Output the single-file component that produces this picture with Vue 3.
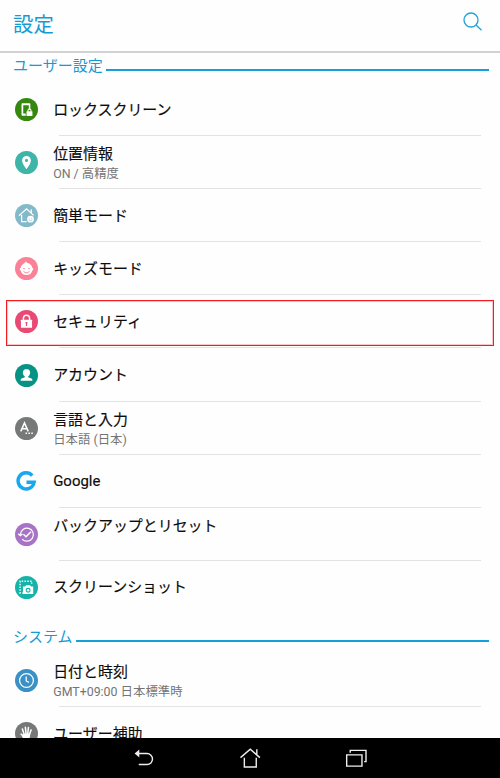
<script setup>
const sections = [
	{
		title: 'ユーザー設定',
		items: [
			{ icon: 'lockscreen', color: '#36870f', label: 'ロックスクリーン' },
			{ icon: 'location', color: '#3db5a9', label: '位置情報', summary: 'ON / 高精度' },
			{ icon: 'easy', color: '#84b9ca', label: '簡単モード' },
			{ icon: 'kids', color: '#fb8196', label: 'キッズモード' },
			{ icon: 'security', color: '#e84a73', label: 'セキュリティ', selected: true },
			{ icon: 'account', color: '#079284', label: 'アカウント' },
			{ icon: 'language', color: '#757977', label: '言語と入力', summary: '日本語 (日本)' },
			{ icon: 'google', color: 'none', label: 'Google' },
			{ icon: 'backup', color: '#a873c4', label: 'バックアップとリセット', summary: '' },
			{ icon: 'screenshot', color: '#16b3a8', label: 'スクリーンショット' },
		],
	},
	{
		title: 'システム',
		items: [
			{ icon: 'clock', color: '#3b91c5', label: '日付と時刻', summary: 'GMT+09:00 日本標準時' },
			{ icon: 'accessibility', color: '#757877', label: 'ユーザー補助' },
		],
	},
]
</script>

<template>
	<div class="screen">
		<header class="app-bar">
			<h1 class="app-title">設定</h1>
			<svg class="search" viewBox="0 0 20 20">
				<circle cx="8" cy="8" r="7" />
				<path d="M13 13l5.5 5.3" />
			</svg>
		</header>

		<main class="content">
			<section v-for="section in sections" :key="section.title" class="section">
				<h2 class="section-title">
					<span>{{ section.title }}</span>
					<i class="section-line"></i>
				</h2>
				<div v-for="item in section.items" :key="item.label" class="row" :class="{ selected: item.selected }">
					<svg class="icon" viewBox="0 0 24 24">
						<circle cx="12" cy="12" r="12" :fill="item.color" />
						<g v-if="item.icon === 'lockscreen'">
							<path fill="#fff" fill-rule="evenodd" d="M7.6 5.4h7.6c.5 0 .8.3.8.8v5.6h-1.6V7.6H8.6v8.6h2.6v2.2H7.6a.8.8 0 0 1-.8-.8V6.2c0-.5.3-.8.8-.8z" />
							<rect x="12" y="13.8" width="6.2" height="5" rx=".4" fill="#fff" />
							<path class="line" stroke-width="1.2" d="M13.5 14.2v-1a1.6 1.6 0 0 1 3.2 0v1" />
						</g>
						<path
							v-else-if="item.icon === 'location'"
							fill="#fff"
							fill-rule="evenodd"
							d="M12 5.2a4.6 4.6 0 0 0-4.6 4.6c0 3.4 4.6 9 4.6 9s4.6-5.6 4.6-9A4.6 4.6 0 0 0 12 5.2zm0 3a1.6 1.6 0 1 1 0 3.2 1.6 1.6 0 0 1 0-3.2z"
						/>
						<g v-else-if="item.icon === 'easy'">
							<path class="line" stroke-width="1.3" d="M4.2 12.2L12 5l7.4 6.9M17 9.4V5.5M6.9 11.5v7h5.3" />
							<circle cx="16.2" cy="15.8" r="3.5" fill="#fff" />
							<path d="M14.2 16.4q2 2 4 0M15 14.3v.8M17.4 14.3v.8" fill="none" stroke="#84b9ca" stroke-width=".7" />
						</g>
						<g v-else-if="item.icon === 'kids'">
							<path fill="#fff" d="M11.6 3.8c-.3 1.3.4 2.1 1.6 2.5 2.5.5 4.4 2.4 4.8 5a1.5 1.5 0 0 1 .1 2.8 6.3 6.3 0 0 1-12.2 0 1.5 1.5 0 0 1 .1-2.8c.3-1.9 1.3-3.3 2.8-4.2 1.2-.8 2.2-1.7 2.8-3.3z" />
							<path d="M8.8 14.8q3.2 3.6 6.4 0M8.6 12h1.6M13.8 12h1.6" fill="none" stroke="#fb8196" stroke-width="1" />
						</g>
						<g v-else-if="item.icon === 'security'">
							<path class="line" stroke-width="1.5" d="M8.8 11V8.6a3.2 3.2 0 0 1 6.4 0V11" />
							<rect x="6.2" y="10.2" width="11.6" height="8.4" rx=".6" fill="#fff" />
							<path d="M11 12.4h2v1.8h-.4v2.4h-1.2v-2.4H11z" fill="#e84a73" />
						</g>
						<path
							v-else-if="item.icon === 'account'"
							fill="#fff"
							d="M12 5.2c-2.3 0-3.8 1.5-3.8 3.8 0 1.6.8 3 2 3.8v1l-3.3 1.4c-.7.3-1 .8-1 1.5v.9h12.2v-.9c0-.7-.3-1.2-1-1.5l-3.3-1.4v-1c1.2-.8 2-2.2 2-3.8 0-2.3-1.5-3.8-3.8-3.8z"
						/>
						<g v-else-if="item.icon === 'language'">
							<path class="line" stroke-width="1.6" d="M6 15l3.9-8.8L13.8 15M7.4 12.2h5" />
							<path fill="#fff" d="M11 16.2h1.6v1.6H11zM14 16.2h1.6v1.6H14zM17 16.2h1.6v1.6H17z" />
						</g>
						<path
							v-else-if="item.icon === 'google'"
							fill="none"
							stroke="#17a8ee"
							stroke-width="3.6"
							d="M18 5.9A8.4 8.4 0 1 0 19.9 12.7H12"
						/>
						<g v-else-if="item.icon === 'backup'">
							<path class="line" stroke-width="1.3" d="M5.6 12A6.8 6.8 0 1 1 7.4 16.8M3.4 11.2l2.1 2.1 2.3-1.8" />
							<path class="line" stroke-width="1.5" d="M8.8 11.8l2.7 2.6 5.2-5.2" />
						</g>
						<g v-else-if="item.icon === 'screenshot'">
							<path class="line" stroke-width="1.4" stroke-dasharray="1.5 1.4" d="M17.4 8.2V5.5H5.3v12.2H8" />
							<path fill="#fff" fill-rule="evenodd" d="M8.3 11h2.4l.8-1.4h4.3l.8 1.4h2.4v7.9H8.3zM13.7 12.3a2.6 2.6 0 1 0 0 5.2 2.6 2.6 0 0 0 0-5.2z" />
							<circle cx="13.7" cy="14.9" r="1.3" fill="#fff" />
						</g>
						<g v-else-if="item.icon === 'clock'">
							<circle class="line" cx="12" cy="12" r="7.2" stroke-width="1.3" />
							<path class="line" stroke-width="1.3" d="M11.7 7.7v4.8l2.9 1.5" />
						</g>
						<g v-else>
							<path class="line hand" d="M9.6 13L7.7 7.4M11.5 12l-.7-6.6M13.3 12l.7-6.3M15 13l1.8-4.8M9.6 15.5l-3.2-2.8" />
							<path fill="#fff" d="M8.8 12.3l7-.4c.2 3-.5 6.7-3 7.3-2.5.3-4.3-2.2-5.6-4.4z" />
						</g>
					</svg>
					<div class="text">
						<span class="label">{{ item.label }}</span>
						<span v-if="item.summary !== undefined" class="summary">{{ item.summary }}</span>
					</div>
				</div>
			</section>
		</main>

		<nav class="nav-bar">
			<svg class="nav-icon" viewBox="0 0 24 24">
				<path d="M6 7h10a5.6 5.6 0 0 1 0 11.7H7.2" />
				<path class="arrow" d="M2.8 7l5-4.3v8.6z" />
			</svg>
			<svg class="nav-icon" viewBox="0 0 24 24">
				<path d="M1.6 11.3L12 2.4l10.3 8.9M19 8.4V2.5M5.7 11.5v9.8h12.7v-9.8" />
			</svg>
			<svg class="nav-icon" viewBox="0 0 24 24">
				<path d="M1.8 8.4h16.3v12H1.8zM5.6 6V3.6h16.8v12h-2" />
			</svg>
		</nav>
	</div>
</template>

<style>
body {
	margin: 0;
	overflow: hidden;
}
</style>

<style scoped>
.screen {
	display: flex;
	flex-direction: column;
	height: 778px;
	overflow: hidden;
	background: #fefefe;
	color: #0c0c0c;
	font-family: Roboto, 'Noto Sans CJK JP', sans-serif;
}

.app-bar {
	display: flex;
	flex: none;
	align-items: flex-start;
	justify-content: space-between;
	box-sizing: border-box;
	height: 53px;
	padding: 11px 17px 0 13px;
	border-bottom: 2px solid #d2d2d2;
}

.app-title {
	margin: 0;
	color: #149bd3;
	font-size: 20.4px;
	font-weight: 400;
	line-height: 29px;
}

.search {
	width: 20px;
	height: 20px;
	margin-top: 1px;
	fill: none;
	stroke: #1ca5d9;
	stroke-width: 1.3;
}

.content {
	flex: 1;
	min-height: 0;
	overflow: hidden;
}

.section-title {
	display: flex;
	align-items: flex-start;
	gap: 3px;
	box-sizing: border-box;
	height: 30px;
	margin: 0;
	padding: 3px 11px 0 13px;
	color: #149bd3;
	font-size: 15px;
	font-weight: 400;
	line-height: 20px;
}

.section + .section .section-title {
	height: 40px;
	padding-top: 13px;
}

.section-line {
	flex: 1;
	height: 2px;
	margin-top: 13px;
	background: #169fd9;
}

.row {
	position: relative;
	display: flex;
	align-items: center;
	gap: 15px;
	box-sizing: border-box;
	height: 53.1px;
	padding-left: 15.2px;
}

.row:not(:last-child)::after {
	position: absolute;
	right: 19px;
	bottom: 0;
	left: 59px;
	height: 1px;
	background: #e3e3e3;
	content: '';
}

.selected::before {
	position: absolute;
	z-index: 1;
	top: 5px;
	right: 6px;
	bottom: 2px;
	left: 6px;
	border: 1px solid #f21d20;
	box-shadow: inset 0 0 0 1px rgba(255, 60, 60, 0.3);
	content: '';
}

.icon {
	flex: none;
	width: 23px;
	height: 23px;
}

.line {
	fill: none;
	stroke: #fff;
}

.hand {
	stroke-width: 1.6;
	stroke-linecap: round;
}

.text {
	display: flex;
	flex-direction: column;
}

.label {
	font-size: 14.95px;
	line-height: 20px;
	-webkit-text-stroke: 0.15px currentColor;
}

.summary {
	height: 17px;
	color: #747474;
	font-size: 12.4px;
	line-height: 19px;
}

.nav-bar {
	display: flex;
	flex: none;
	align-items: center;
	justify-content: center;
	gap: 84px;
	height: 40px;
	background: #000;
}

.nav-icon {
	width: 22.5px;
	height: 22.5px;
	fill: none;
	stroke: #eee;
	stroke-width: 1.5;
}

.arrow {
	fill: #eee;
	stroke: none;
}
</style>
